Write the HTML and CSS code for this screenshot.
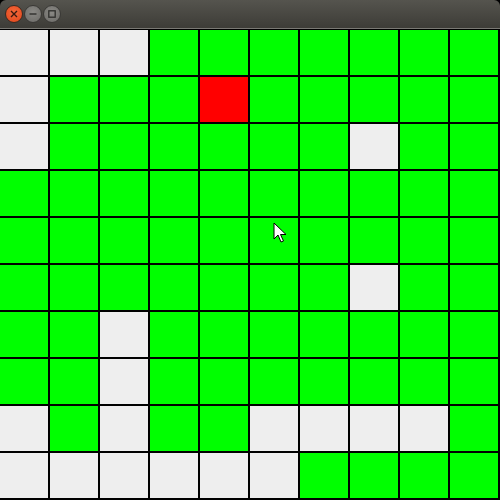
FILE: index.html
```
<!DOCTYPE html>
<html>
<head>
<meta charset="utf-8">
<link rel="stylesheet" href="styles.css">
</head>
<body>
<div class="window">
  <div class="titlebar">
    <span class="btn close"><svg width="8" height="8" viewBox="0 0 8 8"><path d="M1 1L7 7M7 1L1 7" stroke="#3a1a10" stroke-width="1.4"/></svg></span>
    <span class="btn min"><svg width="8" height="8" viewBox="0 0 8 8"><path d="M0.5 4H7.5" stroke="#2e2e2c" stroke-width="1.4"/></svg></span>
    <span class="btn max"><svg width="8" height="8" viewBox="0 0 8 8"><rect x="0.8" y="0.8" width="6.4" height="6.4" fill="none" stroke="#2e2e2c" stroke-width="1.3"/></svg></span>
  </div>
  <div class="grid" id="grid"></div>
  <svg class="cursor" width="14" height="22" viewBox="0 0 14 22"><path d="M1 1V17L5 13L8 20L10.5 19L7.5 12.5H13Z" fill="#fff" stroke="#000" stroke-width="1" stroke-linejoin="round"/></svg>
</div>
<script src="script.js"></script>
</body>
</html>
```
FILE: styles.css
```
html, body { margin: 0; padding: 0; background: #5b2a59; }
.window { position: relative; width: 500px; height: 500px; background: #000; overflow: hidden; }
.titlebar {
  background: linear-gradient(#55544e, #3d3c37);
  border-radius: 6px 6px 0 0;
  display: flex; align-items: center; gap: 1px;
  padding-left: 5px;
  box-sizing: border-box;
  border-bottom: 1px solid #7a7974;
  height: 29px;
}
.btn { width: 18px; height: 18px; border-radius: 50%; display: flex; align-items: center; justify-content: center; box-sizing: border-box; }
.close { background: radial-gradient(circle at 50% 40%, #f5693b, #e0451a); border: 1px solid #3a2a22; }
.min, .max { background: radial-gradient(circle at 50% 40%, #8a8985, #6b6a66); border: 1px solid #3a3936; }
.grid {
  display: grid;
  grid-template-columns: repeat(10, 48px);
  grid-template-rows: repeat(10, 45px);
  gap: 2px;
  padding: 1px 2px 2px 0;
  background: #000;
}
.cell { background: #00ff00; }
.cell.w { background: #eeeeee; }
.cell.r { background: #ff0000; }
.cursor { position: absolute; left: 273px; top: 222px; }
```
FILE: script.js
```
var map = [
"WWWGGGGGGG",
"WGGGRGGGGG",
"WGGGGGGWGG",
"GGGGGGGGGG",
"GGGGGGGGGG",
"GGGGGGGWGG",
"GGWGGGGGGG",
"GGWGGGGGGG",
"WGWGGWWWWG",
"WWWWWWGGGG"];
var g = document.getElementById('grid');
map.forEach(function(row){
  for (var i=0;i<row.length;i++){
    var d=document.createElement('div');
    d.className='cell'+(row[i]==='W'?' w':row[i]==='R'?' r':'');
    g.appendChild(d);
  }
});
```
